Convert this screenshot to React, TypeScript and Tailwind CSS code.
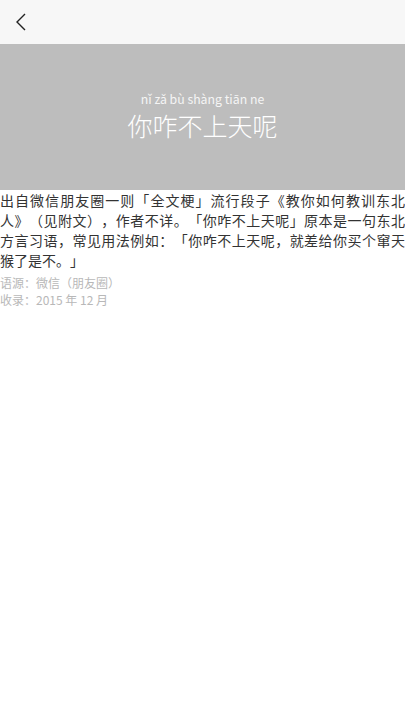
import React from "react";

const font = { fontFamily: '"Noto Sans CJK SC", "Noto Sans", sans-serif' };

export default function App() {
  return (
    <div className="w-[405px] min-h-[720px] bg-white [text-spacing-trim:space-all]" style={font}>
      <div className="h-[44px] bg-[#f7f7f7] flex items-center pl-[14px]">
        <svg width="14" height="18" viewBox="0 0 14 18" fill="none">
          <path d="M11 1 L3 9 L11 17" stroke="#222" strokeWidth="1.4" />
        </svg>
      </div>
      <div className="h-[146px] bg-[#bdbdbd] flex flex-col items-center pt-[47px] text-white">
        <div className="text-[12.3px] leading-[16px] text-[#f5f5f5]">nǐ zǎ bù shàng tiān ne</div>
        <div className="text-[25px] leading-[32px] mt-[2px] font-light">你咋不上天呢</div>
      </div>
      <div className="text-[14px] leading-[20px] text-[#333] text-justify">
        出自微信朋友圈一则「全文梗」流行段子《教你如何教训东北人》（见附文），作者不详。「你咋不上天呢」原本是一句东北方言习语，常见用法例如：「你咋不上天呢，就差给你买个窜天猴了是不。」
      </div>
      <div className="text-[12px] leading-[17px] text-[#b8b8b8] mt-[4px]">
        <div>语源：微信（朋友圈）</div>
        <div>收录：2015 年 12 月</div>
      </div>
    </div>
  );
}
